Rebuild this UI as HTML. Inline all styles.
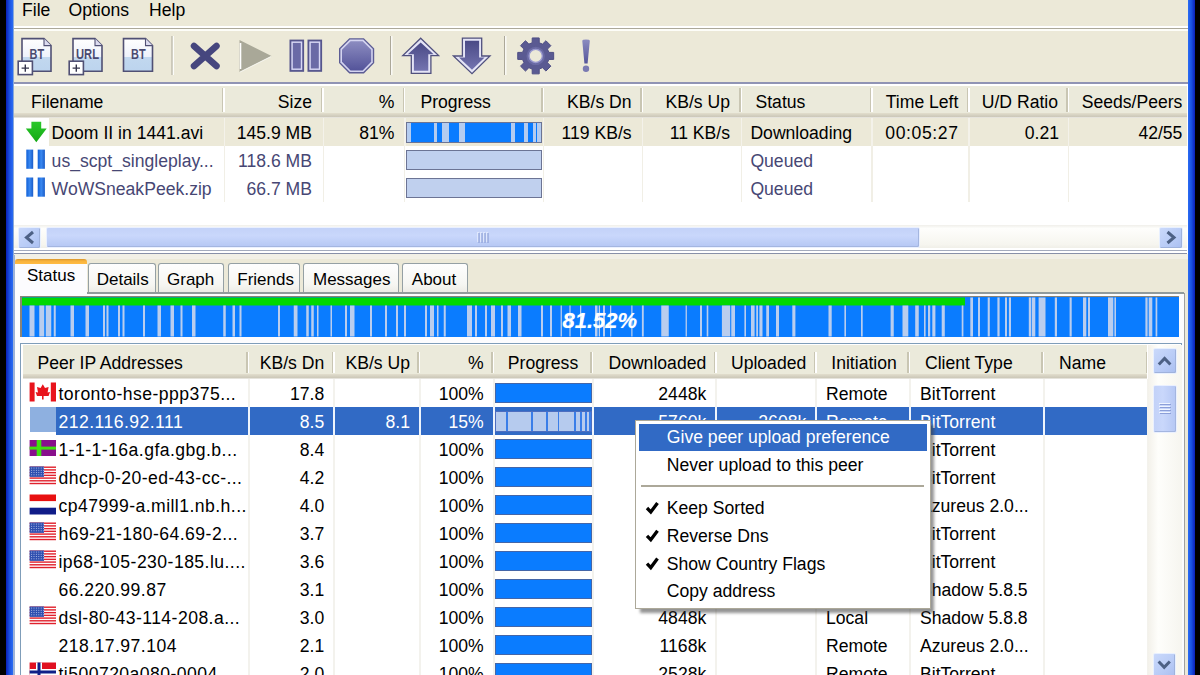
<!DOCTYPE html><html><head><meta charset="utf-8"><style>
html,body{margin:0;padding:0}
body{width:1200px;height:675px;overflow:hidden;position:relative;background:#ECE9D8;font-family:"Liberation Sans",sans-serif;font-size:18px}
.t{position:absolute;white-space:pre;line-height:20px}
.b{position:absolute}
svg{position:absolute;overflow:visible}
</style></head><body>
<div class="b" style="left:0px;top:0px;width:6px;height:675px;background:#000"></div>
<div class="b" style="left:6px;top:0px;width:7px;height:675px;background:linear-gradient(90deg,#0a20b8,#1a50e0 50%,#2a6cf4)"></div>
<div class="b" style="left:13px;top:0px;width:1px;height:675px;background:#8aa8d8"></div>
<div class="b" style="left:1188px;top:0px;width:7px;height:675px;background:linear-gradient(90deg,#2a6cf4,#1a50e0 50%,#0a20b8)"></div>
<div class="b" style="left:1195px;top:0px;width:5px;height:675px;background:#000"></div>
<div class="t" style="left:22px;top:0.18px;color:#000;font-size:17.6px;">File</div>
<div class="t" style="left:68.5px;top:0.18px;color:#000;font-size:17.6px;">Options</div>
<div class="t" style="left:149px;top:0.18px;color:#000;font-size:17.6px;">Help</div>
<div class="b" style="left:14px;top:26.4px;width:1174px;height:1.3px;background:#fff"></div>
<div class="b" style="left:14px;top:27.7px;width:1174px;height:1.6px;background:#aca899"></div>
<div class="b" style="left:14px;top:29.3px;width:1174px;height:1.9px;background:#fdfdf8"></div>
<svg style="left:0;top:0" width="1200" height="90" viewBox="0 0 1200 90"><defs><linearGradient id="docg" x1="0" y1="0" x2="0" y2="1"><stop offset="0" stop-color="#ffffff"/><stop offset="0.55" stop-color="#eef2fb"/><stop offset="0.56" stop-color="#c2d8ef"/><stop offset="1" stop-color="#bcd4ee"/></linearGradient><linearGradient id="purp" x1="0" y1="0" x2="0" y2="1"><stop offset="0" stop-color="#8c8cc0"/><stop offset="1" stop-color="#54549a"/></linearGradient><linearGradient id="purp2" x1="0" y1="0" x2="0" y2="1"><stop offset="0" stop-color="#5a5a98"/><stop offset="1" stop-color="#6c6cac"/></linearGradient></defs><g><path d="M22 38.6 H44 L51 45.6 V71.3 H22 Z" fill="url(#docg)" stroke="#505074" stroke-width="1.6"/><path d="M44 38.6 V45.6 H51" fill="#dcdcf0" stroke="#505074" stroke-width="1.1"/><text x="29.6" y="58.6" font-family="Liberation Sans" font-weight="bold" font-size="15.5" fill="#4a4a70" textLength="14.6" lengthAdjust="spacingAndGlyphs">BT</text><rect x="18.2" y="61.2" width="14.2" height="13.4" fill="#fff" stroke="#505074" stroke-width="1.6"/><path d="M21.599999999999998 68.10000000000001 H29.0 M25.299999999999997 64.4 V71.7" stroke="#34344c" stroke-width="1.4"/></g><g><path d="M73 38.6 H95 L102 45.6 V71.3 H73 Z" fill="url(#docg)" stroke="#505074" stroke-width="1.6"/><path d="M95 38.6 V45.6 H102" fill="#dcdcf0" stroke="#505074" stroke-width="1.1"/><text x="76" y="58.6" font-family="Liberation Sans" font-weight="bold" font-size="15.5" fill="#4a4a70" textLength="23" lengthAdjust="spacingAndGlyphs">URL</text><rect x="69.2" y="61.2" width="14.2" height="13.4" fill="#fff" stroke="#505074" stroke-width="1.6"/><path d="M72.60000000000001 68.10000000000001 H80.0 M76.3 64.4 V71.7" stroke="#34344c" stroke-width="1.4"/></g><g><path d="M123.5 38.6 H145.5 L152.5 45.6 V71.3 H123.5 Z" fill="url(#docg)" stroke="#505074" stroke-width="1.6"/><path d="M145.5 38.6 V45.6 H152.5" fill="#dcdcf0" stroke="#505074" stroke-width="1.1"/><text x="131.1" y="58.6" font-family="Liberation Sans" font-weight="bold" font-size="15.5" fill="#4a4a70" textLength="14.6" lengthAdjust="spacingAndGlyphs">BT</text></g><rect x="171.5" y="36" width="1.2" height="39" fill="#aca899"/><rect x="172.7" y="36" width="1.2" height="39" fill="#fff"/><rect x="390" y="36" width="1.2" height="39" fill="#aca899"/><rect x="391.2" y="36" width="1.2" height="39" fill="#fff"/><rect x="504" y="36" width="1.2" height="39" fill="#aca899"/><rect x="505.2" y="36" width="1.2" height="39" fill="#fff"/><path d="M194 46 L216.5 66 M216.5 46 L194 66" stroke="#46467e" stroke-width="6.5" stroke-linecap="round"/><path d="M239.5 40 L271.5 56 L239.5 72 Z" fill="#a9a898"/><path d="M240.5 43 V69" stroke="#fff" stroke-width="1.6"/><path d="M240 72 L271 56.5" stroke="#fff" stroke-width="1" opacity="0.7"/><rect x="290.3" y="40.4" width="13" height="30.6" fill="#6a6aa6" stroke="#56568c" stroke-width="1.6"/><rect x="292.1" y="42.2" width="9.4" height="27" fill="none" stroke="#d8d8f4" stroke-width="1.4"/><rect x="308.3" y="40.4" width="13" height="30.6" fill="#6a6aa6" stroke="#56568c" stroke-width="1.6"/><rect x="310.1" y="42.2" width="9.4" height="27" fill="none" stroke="#d8d8f4" stroke-width="1.4"/><polygon points="374.20,63.09 363.89,73.40 349.31,73.40 339.00,63.09 339.00,48.51 349.31,38.20 363.89,38.20 374.20,48.51" fill="#5c5c94"/><polygon points="372.80,62.51 363.31,72.00 349.89,72.00 340.40,62.51 340.40,49.09 349.89,39.60 363.31,39.60 372.80,49.09" fill="#d4d4f0"/><polygon points="371.20,61.85 362.65,70.40 350.55,70.40 342.00,61.85 342.00,49.75 350.55,41.20 362.65,41.20 371.20,49.75" fill="url(#purp)"/><linearGradient id="arw" x1="0" y1="0" x2="0" y2="1"><stop offset="0" stop-color="#4a4a86"/><stop offset="1" stop-color="#7474b0"/></linearGradient><path d="M420.7 38.2 L438.6 55.6 H430.9 V73.4 H411.3 V55.6 H402.8 Z" fill="#e4e4f6" stroke="#50507e" stroke-width="1.3" stroke-linejoin="miter"/><path d="M420.7 42.6 L433.6 54.2 H428.3 V70.8 H413.9 V54.2 H407.8 Z" fill="url(#arw)"/><path d="M462.4 38.2 H481.7 V56 H490 L472 73.6 L453.4 56 H462.4 Z" fill="#e4e4f6" stroke="#50507e" stroke-width="1.3"/><path d="M465 40.8 H479.1 V57.4 H484.6 L472 69.8 L459 57.4 H465 Z" fill="url(#arw)"/><polygon points="548.84,52.38 553.66,52.41 553.66,59.39 548.84,59.42 547.48,62.70 550.87,66.13 545.93,71.07 542.50,67.68 539.22,69.04 539.19,73.86 532.21,73.86 532.18,69.04 528.90,67.68 525.47,71.07 520.53,66.13 523.92,62.70 522.56,59.42 517.74,59.39 517.74,52.41 522.56,52.38 523.92,49.10 520.53,45.67 525.47,40.73 528.90,44.12 532.18,42.76 532.21,37.94 539.19,37.94 539.22,42.76 542.50,44.12 545.93,40.73 550.87,45.67 547.48,49.10" fill="#5a5a92" stroke="#4e4e84" stroke-width="1"/><circle cx="535.7" cy="55.9" r="9.2" fill="#6a6aa4"/><circle cx="535.7" cy="55.9" r="6.6" fill="#ece9d8" stroke="#9a9ad0" stroke-width="1.3"/><path d="M582.3 41 Q582.3 39.6 586 39.6 Q589.8 39.6 589.8 41 L587.6 63.5 H584.4 Z" fill="url(#purp)"/><circle cx="586" cy="68.8" r="3.2" fill="#7a7ab2"/></svg>
<div class="b" style="left:14px;top:81.9px;width:1174px;height:2.2px;background:#9094b4"></div>
<div class="b" style="left:14px;top:84px;width:1174px;height:2px;background:#fff"></div>
<div class="b" style="left:14px;top:86px;width:1174px;height:169px;background:#fff"></div>
<div class="b" style="left:14px;top:86px;width:1173px;height:32px;background:linear-gradient(#ebeadb 0,#ebeadb 27px,#e2decd 27px,#d6d2c2 29px,#cbc7b8 31px,#fff 32px)"></div>
<div class="b" style="left:221.8px;top:88px;width:1.6px;height:24px;background:#c9c6b3"></div>
<div class="b" style="left:223.4px;top:88px;width:1.4px;height:24px;background:#fff"></div>
<div class="b" style="left:320.8px;top:88px;width:1.6px;height:24px;background:#c9c6b3"></div>
<div class="b" style="left:322.40000000000003px;top:88px;width:1.4px;height:24px;background:#fff"></div>
<div class="b" style="left:402.5px;top:88px;width:1.6px;height:24px;background:#c9c6b3"></div>
<div class="b" style="left:404.1px;top:88px;width:1.4px;height:24px;background:#fff"></div>
<div class="b" style="left:541.3px;top:88px;width:1.6px;height:24px;background:#c9c6b3"></div>
<div class="b" style="left:542.9px;top:88px;width:1.4px;height:24px;background:#fff"></div>
<div class="b" style="left:640.3px;top:88px;width:1.6px;height:24px;background:#c9c6b3"></div>
<div class="b" style="left:641.9px;top:88px;width:1.4px;height:24px;background:#fff"></div>
<div class="b" style="left:739.3px;top:88px;width:1.6px;height:24px;background:#c9c6b3"></div>
<div class="b" style="left:740.9px;top:88px;width:1.4px;height:24px;background:#fff"></div>
<div class="b" style="left:869.8px;top:88px;width:1.6px;height:24px;background:#c9c6b3"></div>
<div class="b" style="left:871.4px;top:88px;width:1.4px;height:24px;background:#fff"></div>
<div class="b" style="left:966.8px;top:88px;width:1.6px;height:24px;background:#c9c6b3"></div>
<div class="b" style="left:968.4px;top:88px;width:1.4px;height:24px;background:#fff"></div>
<div class="b" style="left:1066.3px;top:88px;width:1.6px;height:24px;background:#c9c6b3"></div>
<div class="b" style="left:1067.8999999999999px;top:88px;width:1.4px;height:24px;background:#fff"></div>
<div class="t" style="left:31px;top:92.18px;color:#000;font-size:17.6px;">Filename</div>
<div class="t" style="right:888px;top:92.18px;color:#000;font-size:17.6px;text-align:right;">Size</div>
<div class="t" style="right:805.5px;top:92.18px;color:#000;font-size:17.6px;text-align:right;">%</div>
<div class="t" style="left:420.4px;top:92.18px;color:#000;font-size:17.6px;">Progress</div>
<div class="t" style="right:568.4px;top:92.18px;color:#000;font-size:17.6px;text-align:right;">KB/s Dn</div>
<div class="t" style="right:470px;top:92.18px;color:#000;font-size:17.6px;text-align:right;">KB/s Up</div>
<div class="t" style="left:755.5px;top:92.18px;color:#000;font-size:17.6px;">Status</div>
<div class="t" style="right:241.60000000000002px;top:92.18px;color:#000;font-size:17.6px;text-align:right;">Time Left</div>
<div class="t" style="right:142px;top:92.18px;color:#000;font-size:17.6px;text-align:right;">U/D Ratio</div>
<div class="t" style="right:17.59999999999991px;top:92.18px;color:#000;font-size:17.6px;text-align:right;">Seeds/Peers</div>
<div class="b" style="left:49px;top:118px;width:1138px;height:28px;background:#ece9d8"></div>
<div class="b" style="left:223.5px;top:118px;width:1.6px;height:28px;background:#f4f2ea"></div>
<div class="b" style="left:223.5px;top:146px;width:1.4px;height:56px;background:#f1efe6"></div>
<div class="b" style="left:322.5px;top:118px;width:1.6px;height:28px;background:#f4f2ea"></div>
<div class="b" style="left:322.5px;top:146px;width:1.4px;height:56px;background:#f1efe6"></div>
<div class="b" style="left:404px;top:118px;width:1.6px;height:28px;background:#f4f2ea"></div>
<div class="b" style="left:404px;top:146px;width:1.4px;height:56px;background:#f1efe6"></div>
<div class="b" style="left:542.8px;top:118px;width:1.6px;height:28px;background:#f4f2ea"></div>
<div class="b" style="left:542.8px;top:146px;width:1.4px;height:56px;background:#f1efe6"></div>
<div class="b" style="left:641.8px;top:118px;width:1.6px;height:28px;background:#f4f2ea"></div>
<div class="b" style="left:641.8px;top:146px;width:1.4px;height:56px;background:#f1efe6"></div>
<div class="b" style="left:740.8px;top:118px;width:1.6px;height:28px;background:#f4f2ea"></div>
<div class="b" style="left:740.8px;top:146px;width:1.4px;height:56px;background:#f1efe6"></div>
<div class="b" style="left:871.3px;top:118px;width:1.6px;height:28px;background:#f4f2ea"></div>
<div class="b" style="left:871.3px;top:146px;width:1.4px;height:56px;background:#f1efe6"></div>
<div class="b" style="left:968.3px;top:118px;width:1.6px;height:28px;background:#f4f2ea"></div>
<div class="b" style="left:968.3px;top:146px;width:1.4px;height:56px;background:#f1efe6"></div>
<div class="b" style="left:1067.8px;top:118px;width:1.6px;height:28px;background:#f4f2ea"></div>
<div class="b" style="left:1067.8px;top:146px;width:1.4px;height:56px;background:#f1efe6"></div>
<svg style="left:0;top:0" width="60" height="210" viewBox="0 0 60 210"><defs><linearGradient id="grn" x1="0" y1="0" x2="0" y2="1"><stop offset="0" stop-color="#2ac82a"/><stop offset="1" stop-color="#14a814"/></linearGradient><linearGradient id="pbar" x1="0" y1="0" x2="1" y2="0"><stop offset="0" stop-color="#1060d8"/><stop offset="0.5" stop-color="#3a88f0"/><stop offset="1" stop-color="#1a5cc8"/></linearGradient></defs><path d="M31.4 121.7 H41.2 V128.5 H46.7 L36.3 142.2 L25.8 128.5 H31.4 Z" fill="url(#grn)"/><rect x="26.3" y="149.6" width="6.9" height="19.2" fill="url(#pbar)"/><rect x="37.7" y="149.6" width="7.2" height="19.2" fill="url(#pbar)"/><rect x="26.3" y="177.5" width="6.9" height="19.2" fill="url(#pbar)"/><rect x="37.7" y="177.5" width="7.2" height="19.2" fill="url(#pbar)"/></svg>
<div class="t" style="left:51.6px;top:122.78px;color:#000;font-size:17.6px;">Doom II in 1441.avi</div>
<div class="t" style="right:888px;top:122.78px;color:#000;font-size:17.6px;text-align:right;">145.9 MB</div>
<div class="t" style="right:805.5px;top:122.78px;color:#000;font-size:17.6px;text-align:right;">81%</div>
<div class="t" style="right:568.4px;top:122.78px;color:#000;font-size:17.6px;text-align:right;">119 KB/s</div>
<div class="t" style="right:470px;top:122.78px;color:#000;font-size:17.6px;text-align:right;">11 KB/s</div>
<div class="t" style="left:750.4px;top:122.78px;color:#000;font-size:17.6px;">Downloading</div>
<div class="t" style="right:241.39999999999998px;top:122.78px;color:#000;font-size:17.6px;text-align:right;letter-spacing:0.6px">00:05:27</div>
<div class="t" style="right:141px;top:122.78px;color:#000;font-size:17.6px;text-align:right;">0.21</div>
<div class="t" style="right:17.59999999999991px;top:122.78px;color:#000;font-size:17.6px;text-align:right;">42/55</div>
<div class="t" style="left:51.6px;top:150.78px;color:#474774;font-size:17.6px;">us_scpt_singleplay...</div>
<div class="t" style="right:888px;top:150.78px;color:#474774;font-size:17.6px;text-align:right;">118.6 MB</div>
<div class="t" style="left:750.4px;top:150.78px;color:#474774;font-size:17.6px;">Queued</div>
<div class="t" style="left:51.6px;top:178.78px;color:#474774;font-size:17.6px;">WoWSneakPeek.zip</div>
<div class="t" style="right:888px;top:178.78px;color:#474774;font-size:17.6px;text-align:right;">66.7 MB</div>
<div class="t" style="left:750.4px;top:178.78px;color:#474774;font-size:17.6px;">Queued</div>
<div class="b" style="left:406.3px;top:121.7px;width:135.7px;height:21px;background:#0a7cff;border:1px solid #6c7494;box-sizing:border-box"></div>
<div class="b" style="left:407.3px;top:122.7px;width:4.0px;height:19px;background:#b4ccf0"></div>
<div class="b" style="left:434px;top:122.7px;width:3.3000000000000114px;height:19px;background:#b4ccf0"></div>
<div class="b" style="left:442px;top:122.7px;width:6.699999999999989px;height:19px;background:#b4ccf0"></div>
<div class="b" style="left:458.7px;top:122.7px;width:6.600000000000023px;height:19px;background:#b4ccf0"></div>
<div class="b" style="left:510.7px;top:122.7px;width:4.000000000000057px;height:19px;background:#b4ccf0"></div>
<div class="b" style="left:524px;top:122.7px;width:4px;height:19px;background:#b4ccf0"></div>
<div class="b" style="left:532.7px;top:122.7px;width:3.2999999999999545px;height:19px;background:#b4ccf0"></div>
<div class="b" style="left:537.3px;top:122.7px;width:3.7000000000000455px;height:19px;background:#b4ccf0"></div>
<div class="b" style="left:406.3px;top:150px;width:135.7px;height:20.3px;background:#c0d0ee;border:1.5px solid #6c7494;box-sizing:border-box"></div>
<div class="b" style="left:406.3px;top:178px;width:135.7px;height:20.3px;background:#c0d0ee;border:1.5px solid #6c7494;box-sizing:border-box"></div>
<div class="b" style="left:14px;top:224.5px;width:1173px;height:23.5px;background:linear-gradient(#f0efea,#fefefc 15%,#f6f5ef 85%,#f0efe8)"></div>
<div class="b" style="left:17.8px;top:226.5px;width:23.5px;height:22px;background:linear-gradient(135deg,#cad9fb,#b8cbf6 60%,#a9bef0);border:1px solid #e8f0ff;border-radius:2px;box-sizing:border-box;box-shadow:inset -1px -1px 0 #9fb2dc"></div>
<div class="b" style="left:1158.7px;top:226.5px;width:24px;height:22px;background:linear-gradient(135deg,#cad9fb,#b8cbf6 60%,#a9bef0);border:1px solid #e8f0ff;border-radius:2px;box-sizing:border-box;box-shadow:inset -1px -1px 0 #9fb2dc"></div>
<div class="b" style="left:46.4px;top:226.9px;width:474px;height:21.5px;"></div>
<div class="b" style="left:46.4px;top:226.9px;width:874.1px;height:21.3px;background:linear-gradient(#c3d2f8,#c9d7fb 40%,#b5c7f4);border:1px solid #eaf0ff;border-radius:2px;box-sizing:border-box;box-shadow:inset -1px -1px 0 #a4b6e0"></div>
<svg style="left:0;top:220" width="1200" height="34" viewBox="0 220 1200 34"><path d="M33 232 L26.5 237.5 L33 243" fill="none" stroke="#4d6185" stroke-width="3"/><path d="M1167.5 232 L1174 237.5 L1167.5 243" fill="none" stroke="#4d6185" stroke-width="3"/><path d="M478 232V242 M481 232V242 M484 232V242 M487 232V242" stroke="#eef4ff" stroke-width="1.2"/><path d="M479 233V243 M482 233V243 M485 233V243 M488 233V243" stroke="#8c9fd8" stroke-width="1.2"/></svg>
<div class="b" style="left:14px;top:248px;width:1173px;height:1.8px;background:#fff"></div>
<div class="b" style="left:14px;top:249.8px;width:1173px;height:1.2px;background:#a4abbd"></div>
<div class="b" style="left:14px;top:251px;width:1173px;height:1.7px;background:#fff"></div>
<div class="b" style="left:14px;top:252.7px;width:1173px;height:1.6px;background:#8890a8"></div>
<div class="b" style="left:14px;top:254.4px;width:1174px;height:5px;background:#f2f0e6"></div>
<div class="b" style="left:14.8px;top:293px;width:1169.5px;height:382px;background:#fcfcfe"></div>
<div class="b" style="left:1183.7px;top:293px;width:1.4px;height:382px;background:#a0a0a0"></div>
<div class="b" style="left:13.3px;top:255px;width:1.5px;height:420px;background:#9db2d8"></div>
<div class="b" style="left:87.5px;top:263.3px;width:68.0px;height:30px;background:linear-gradient(#fefefe,#f6f6f2 70%,#ecebe5);border:1.4px solid #95a0a4;border-bottom:none;border-radius:3px 3px 0 0;box-sizing:border-box"></div>
<div class="t" style="left:96.7px;top:269.78px;color:#000;font-size:17px;">Details</div>
<div class="b" style="left:158.3px;top:263.3px;width:66.19999999999999px;height:30px;background:linear-gradient(#fefefe,#f6f6f2 70%,#ecebe5);border:1.4px solid #95a0a4;border-bottom:none;border-radius:3px 3px 0 0;box-sizing:border-box"></div>
<div class="t" style="left:167px;top:269.78px;color:#000;font-size:17px;">Graph</div>
<div class="b" style="left:227.6px;top:263.3px;width:72.9px;height:30px;background:linear-gradient(#fefefe,#f6f6f2 70%,#ecebe5);border:1.4px solid #95a0a4;border-bottom:none;border-radius:3px 3px 0 0;box-sizing:border-box"></div>
<div class="t" style="left:237.3px;top:269.78px;color:#000;font-size:17px;">Friends</div>
<div class="b" style="left:303.4px;top:263.3px;width:95.60000000000002px;height:30px;background:linear-gradient(#fefefe,#f6f6f2 70%,#ecebe5);border:1.4px solid #95a0a4;border-bottom:none;border-radius:3px 3px 0 0;box-sizing:border-box"></div>
<div class="t" style="left:313px;top:269.78px;color:#000;font-size:17px;">Messages</div>
<div class="b" style="left:402px;top:263.3px;width:65.5px;height:30px;background:linear-gradient(#fefefe,#f6f6f2 70%,#ecebe5);border:1.4px solid #95a0a4;border-bottom:none;border-radius:3px 3px 0 0;box-sizing:border-box"></div>
<div class="t" style="left:411.8px;top:269.78px;color:#000;font-size:17px;">About</div>
<div class="b" style="left:87px;top:292.2px;width:1097px;height:1.4px;background:#919b9c"></div>
<div class="b" style="left:14.8px;top:259.5px;width:72.5px;height:35px;background:#fcfcfe;border-radius:4px 4px 0 0"></div>
<div class="b" style="left:14.8px;top:259.4px;width:72.5px;height:4.4px;background:linear-gradient(#d8962c,#f8b23c 40%,#ffbc44);border-radius:3px 3px 0 0"></div>
<div class="t" style="left:27px;top:266.38px;color:#000;font-size:17px;">Status</div>
<div class="b" style="left:20px;top:296px;width:1158.6px;height:40.5px;background:#0a7cff;border-top:1.5px solid #8a8478;border-left:2px solid #8a8478;box-sizing:border-box"></div>
<svg style="left:0;top:290" width="1200" height="50" viewBox="0 290 1200 50"><rect x="22" y="297.5" width="943" height="8" fill="#00d800"/><rect x="29.5" y="305.5" width="5.00" height="31.0" fill="#b9cdee"/><rect x="39.25" y="305.5" width="5.00" height="31.0" fill="#b9cdee"/><rect x="45.75" y="305.5" width="5.50" height="31.0" fill="#b9cdee"/><rect x="53.75" y="305.5" width="2.00" height="31.0" fill="#b9cdee"/><rect x="70.5" y="305.5" width="3.50" height="31.0" fill="#b9cdee"/><rect x="85.5" y="305.5" width="3.50" height="31.0" fill="#b9cdee"/><rect x="103" y="305.5" width="2.00" height="31.0" fill="#b9cdee"/><rect x="106.5" y="305.5" width="2.00" height="31.0" fill="#b9cdee"/><rect x="118" y="305.5" width="2.00" height="31.0" fill="#b9cdee"/><rect x="122.5" y="305.5" width="2.00" height="31.0" fill="#b9cdee"/><rect x="143" y="305.5" width="2.00" height="31.0" fill="#b9cdee"/><rect x="157.5" y="305.5" width="3.50" height="31.0" fill="#b9cdee"/><rect x="170.5" y="305.5" width="3.50" height="31.0" fill="#b9cdee"/><rect x="180.5" y="305.5" width="2.00" height="31.0" fill="#b9cdee"/><rect x="192" y="305.5" width="3.50" height="31.0" fill="#b9cdee"/><rect x="223.25" y="305.5" width="2.50" height="31.0" fill="#b9cdee"/><rect x="232.5" y="305.5" width="2.50" height="31.0" fill="#b9cdee"/><rect x="239.5" y="305.5" width="2.00" height="31.0" fill="#b9cdee"/><rect x="278" y="305.5" width="2.00" height="31.0" fill="#b9cdee"/><rect x="293.75" y="305.5" width="3.75" height="31.0" fill="#b9cdee"/><rect x="306.25" y="305.5" width="2.50" height="31.0" fill="#b9cdee"/><rect x="311.25" y="305.5" width="2.50" height="31.0" fill="#b9cdee"/><rect x="317" y="305.5" width="1.50" height="31.0" fill="#b9cdee"/><rect x="330.5" y="305.5" width="1.50" height="31.0" fill="#b9cdee"/><rect x="345" y="305.5" width="2.00" height="31.0" fill="#b9cdee"/><rect x="350" y="305.5" width="4.50" height="31.0" fill="#b9cdee"/><rect x="370" y="305.5" width="2.00" height="31.0" fill="#b9cdee"/><rect x="385" y="305.5" width="2.00" height="31.0" fill="#b9cdee"/><rect x="396" y="305.5" width="2.00" height="31.0" fill="#b9cdee"/><rect x="404" y="305.5" width="2.00" height="31.0" fill="#b9cdee"/><rect x="425" y="305.5" width="2.00" height="31.0" fill="#b9cdee"/><rect x="430" y="305.5" width="4.00" height="31.0" fill="#b9cdee"/><rect x="437" y="305.5" width="1.50" height="31.0" fill="#b9cdee"/><rect x="443.75" y="305.5" width="2.00" height="31.0" fill="#b9cdee"/><rect x="467" y="305.5" width="5.00" height="31.0" fill="#b9cdee"/><rect x="475" y="305.5" width="2.00" height="31.0" fill="#b9cdee"/><rect x="485" y="305.5" width="2.00" height="31.0" fill="#b9cdee"/><rect x="491" y="305.5" width="4.00" height="31.0" fill="#b9cdee"/><rect x="501" y="305.5" width="2.00" height="31.0" fill="#b9cdee"/><rect x="507.5" y="305.5" width="3.50" height="31.0" fill="#b9cdee"/><rect x="518" y="305.5" width="3.50" height="31.0" fill="#b9cdee"/><rect x="541" y="305.5" width="2.00" height="31.0" fill="#b9cdee"/><rect x="550" y="305.5" width="2.00" height="31.0" fill="#b9cdee"/><rect x="560.6" y="305.5" width="1.30" height="31.0" fill="#b9cdee"/><rect x="569.4" y="305.5" width="1.20" height="31.0" fill="#b9cdee"/><rect x="580" y="305.5" width="1.25" height="31.0" fill="#b9cdee"/><rect x="595" y="305.5" width="2.50" height="31.0" fill="#b9cdee"/><rect x="598.75" y="305.5" width="1.25" height="31.0" fill="#b9cdee"/><rect x="603" y="305.5" width="2.00" height="31.0" fill="#b9cdee"/><rect x="610" y="305.5" width="1.25" height="31.0" fill="#b9cdee"/><rect x="631.25" y="305.5" width="1.25" height="31.0" fill="#b9cdee"/><rect x="641.9" y="305.5" width="1.85" height="31.0" fill="#b9cdee"/><rect x="661.25" y="305.5" width="7.50" height="31.0" fill="#b9cdee"/><rect x="685.6" y="305.5" width="1.30" height="31.0" fill="#b9cdee"/><rect x="700" y="305.5" width="2.00" height="31.0" fill="#b9cdee"/><rect x="706.7" y="305.5" width="1.60" height="31.0" fill="#b9cdee"/><rect x="721.9" y="305.5" width="8.30" height="31.0" fill="#b9cdee"/><rect x="731.25" y="305.5" width="3.75" height="31.0" fill="#b9cdee"/><rect x="744.4" y="305.5" width="1.60" height="31.0" fill="#b9cdee"/><rect x="751" y="305.5" width="3.60" height="31.0" fill="#b9cdee"/><rect x="756.25" y="305.5" width="1.75" height="31.0" fill="#b9cdee"/><rect x="759.4" y="305.5" width="3.10" height="31.0" fill="#b9cdee"/><rect x="766.25" y="305.5" width="2.75" height="31.0" fill="#b9cdee"/><rect x="776" y="305.5" width="3.00" height="31.0" fill="#b9cdee"/><rect x="792.3" y="305.5" width="3.10" height="31.0" fill="#b9cdee"/><rect x="828.5" y="305.5" width="3.20" height="31.0" fill="#b9cdee"/><rect x="844.4" y="305.5" width="1.60" height="31.0" fill="#b9cdee"/><rect x="861" y="305.5" width="1.70" height="31.0" fill="#b9cdee"/><rect x="890.6" y="305.5" width="3.15" height="31.0" fill="#b9cdee"/><rect x="902.5" y="305.5" width="5.80" height="31.0" fill="#b9cdee"/><rect x="915.2" y="305.5" width="3.55" height="31.0" fill="#b9cdee"/><rect x="924" y="305.5" width="1.60" height="31.0" fill="#b9cdee"/><rect x="928" y="305.5" width="2.20" height="31.0" fill="#b9cdee"/><rect x="932.3" y="305.5" width="3.10" height="31.0" fill="#b9cdee"/><rect x="941.7" y="305.5" width="3.10" height="31.0" fill="#b9cdee"/><rect x="961.7" y="305.5" width="1.70" height="31.0" fill="#b9cdee"/><rect x="970.3" y="297.5" width="2.70" height="39.0" fill="#b9cdee"/><rect x="978" y="297.5" width="2.00" height="39.0" fill="#b9cdee"/><rect x="987.7" y="297.5" width="2.10" height="39.0" fill="#b9cdee"/><rect x="997.4" y="297.5" width="2.20" height="39.0" fill="#b9cdee"/><rect x="1005" y="297.5" width="2.00" height="39.0" fill="#b9cdee"/><rect x="1008.9" y="297.5" width="2.10" height="39.0" fill="#b9cdee"/><rect x="1028.8" y="297.5" width="2.20" height="39.0" fill="#b9cdee"/><rect x="1031.7" y="297.5" width="3.60" height="39.0" fill="#b9cdee"/><rect x="1038.6" y="297.5" width="6.90" height="39.0" fill="#b9cdee"/><rect x="1054.8" y="297.5" width="2.20" height="39.0" fill="#b9cdee"/><rect x="1069.6" y="297.5" width="2.10" height="39.0" fill="#b9cdee"/><rect x="1083" y="297.5" width="3.30" height="39.0" fill="#b9cdee"/><rect x="1088" y="297.5" width="2.00" height="39.0" fill="#b9cdee"/><rect x="1108" y="297.5" width="5.30" height="39.0" fill="#b9cdee"/><rect x="1114.4" y="297.5" width="1.60" height="39.0" fill="#b9cdee"/><rect x="1145.4" y="297.5" width="2.20" height="39.0" fill="#b9cdee"/><rect x="1148.7" y="297.5" width="3.60" height="39.0" fill="#b9cdee"/><rect x="1155.6" y="297.5" width="1.70" height="39.0" fill="#b9cdee"/></svg>
<div class="t" style="left:562.5px;top:310.73px;color:#fff;font-size:22px;font-weight:bold;font-style:italic;text-shadow:0 0 1px rgba(255,255,255,.5)">81.52%</div>
<div class="b" style="left:20px;top:343.4px;width:1161.6px;height:340px;background:#fff;border:1.2px solid #7f9db9;box-sizing:border-box"></div>
<div class="b" style="left:22.5px;top:345px;width:1124.5px;height:34px;background:linear-gradient(#ebeadb 0,#ebeadb 29px,#e2decd 29px,#d6d2c2 31px,#cbc7b8 33px,#fff 34px)"></div>
<div class="b" style="left:246.2px;top:351.5px;width:1.6px;height:21px;background:#c9c6b3"></div>
<div class="b" style="left:247.8px;top:351.5px;width:1.4px;height:21px;background:#fff"></div>
<div class="b" style="left:331.7px;top:351.5px;width:1.6px;height:21px;background:#c9c6b3"></div>
<div class="b" style="left:333.3px;top:351.5px;width:1.4px;height:21px;background:#fff"></div>
<div class="b" style="left:417.45px;top:351.5px;width:1.6px;height:21px;background:#c9c6b3"></div>
<div class="b" style="left:419.05px;top:351.5px;width:1.4px;height:21px;background:#fff"></div>
<div class="b" style="left:491.2px;top:351.5px;width:1.6px;height:21px;background:#c9c6b3"></div>
<div class="b" style="left:492.8px;top:351.5px;width:1.4px;height:21px;background:#fff"></div>
<div class="b" style="left:589.95px;top:351.5px;width:1.6px;height:21px;background:#c9c6b3"></div>
<div class="b" style="left:591.55px;top:351.5px;width:1.4px;height:21px;background:#fff"></div>
<div class="b" style="left:713.7px;top:351.5px;width:1.6px;height:21px;background:#c9c6b3"></div>
<div class="b" style="left:715.3px;top:351.5px;width:1.4px;height:21px;background:#fff"></div>
<div class="b" style="left:813.7px;top:351.5px;width:1.6px;height:21px;background:#c9c6b3"></div>
<div class="b" style="left:815.3px;top:351.5px;width:1.4px;height:21px;background:#fff"></div>
<div class="b" style="left:907.45px;top:351.5px;width:1.6px;height:21px;background:#c9c6b3"></div>
<div class="b" style="left:909.05px;top:351.5px;width:1.4px;height:21px;background:#fff"></div>
<div class="b" style="left:1041.4px;top:351.5px;width:1.6px;height:21px;background:#c9c6b3"></div>
<div class="b" style="left:1043.0px;top:351.5px;width:1.4px;height:21px;background:#fff"></div>
<div class="b" style="left:1145.5px;top:351.5px;width:1.4px;height:21px;background:#c9c6b3"></div>
<div class="t" style="left:37.5px;top:353.18px;color:#000;font-size:17.6px;">Peer IP Addresses</div>
<div class="t" style="right:875.75px;top:353.18px;color:#000;font-size:17.6px;text-align:right;">KB/s Dn</div>
<div class="t" style="right:790px;top:353.18px;color:#000;font-size:17.6px;text-align:right;">KB/s Up</div>
<div class="t" style="right:716.25px;top:353.18px;color:#000;font-size:17.6px;text-align:right;">%</div>
<div class="t" style="left:393px;width:300px;top:353.18px;color:#000;font-size:17.6px;text-align:center;">Progress</div>
<div class="t" style="right:493.75px;top:353.18px;color:#000;font-size:17.6px;text-align:right;">Downloaded</div>
<div class="t" style="right:393.75px;top:353.18px;color:#000;font-size:17.6px;text-align:right;">Uploaded</div>
<div class="t" style="left:831.25px;top:353.18px;color:#000;font-size:17.6px;">Initiation</div>
<div class="t" style="left:925px;top:353.18px;color:#000;font-size:17.6px;">Client Type</div>
<div class="t" style="left:1059px;top:353.18px;color:#000;font-size:17.6px;">Name</div>
<div class="b" style="left:247.8px;top:379px;width:2.2px;height:300px;background:#f3f2ed"></div>
<div class="b" style="left:333.3px;top:379px;width:2.2px;height:300px;background:#f3f2ed"></div>
<div class="b" style="left:419.05px;top:379px;width:2.2px;height:300px;background:#f3f2ed"></div>
<div class="b" style="left:492.8px;top:379px;width:2.2px;height:300px;background:#f3f2ed"></div>
<div class="b" style="left:591.55px;top:379px;width:2.2px;height:300px;background:#f3f2ed"></div>
<div class="b" style="left:715.3px;top:379px;width:2.2px;height:300px;background:#f3f2ed"></div>
<div class="b" style="left:815.3px;top:379px;width:2.2px;height:300px;background:#f3f2ed"></div>
<div class="b" style="left:909.05px;top:379px;width:2.2px;height:300px;background:#f3f2ed"></div>
<div class="b" style="left:1043.0px;top:379px;width:2.2px;height:300px;background:#f3f2ed"></div>
<div class="b" style="left:1146.5px;top:379px;width:1.6px;height:300px;background:#f3f2ed"></div>
<div class="b" style="left:56px;top:407px;width:1090.7px;height:28px;background:#316ac5"></div>
<div class="b" style="left:29.6px;top:407.4px;width:26.4px;height:25px;background:#8eb0e0"></div>
<div class="b" style="left:247.8px;top:407px;width:2.2px;height:28px;background:#eef4fc"></div>
<div class="b" style="left:333.3px;top:407px;width:2.2px;height:28px;background:#eef4fc"></div>
<div class="b" style="left:419.05px;top:407px;width:2.2px;height:28px;background:#eef4fc"></div>
<div class="b" style="left:492.8px;top:407px;width:2.2px;height:28px;background:#eef4fc"></div>
<div class="b" style="left:591.55px;top:407px;width:2.2px;height:28px;background:#eef4fc"></div>
<div class="b" style="left:715.3px;top:407px;width:2.2px;height:28px;background:#eef4fc"></div>
<div class="b" style="left:815.3px;top:407px;width:2.2px;height:28px;background:#eef4fc"></div>
<div class="b" style="left:909.05px;top:407px;width:2.2px;height:28px;background:#eef4fc"></div>
<div class="b" style="left:1043.0px;top:407px;width:2.2px;height:28px;background:#eef4fc"></div>
<div class="t" style="left:58.5px;top:383.78px;color:#000;font-size:17.6px;letter-spacing:0.45px">toronto-hse-ppp375...</div>
<div class="t" style="right:875.75px;top:383.78px;color:#000;font-size:17.6px;text-align:right;">17.8</div>
<div class="t" style="right:716.25px;top:383.78px;color:#000;font-size:17.6px;text-align:right;">100%</div>
<div class="b" style="left:495px;top:382.8px;width:96.8px;height:20.6px;background:#0a7cff;border:1.2px solid #4466a8;box-sizing:border-box"></div>
<div class="t" style="right:493.75px;top:383.78px;color:#000;font-size:17.6px;text-align:right;">2448k</div>
<div class="t" style="left:826px;top:383.78px;color:#000;font-size:17.6px;">Remote</div>
<div class="t" style="left:920px;top:383.78px;color:#000;font-size:17.6px;">BitTorrent</div>
<div class="t" style="left:58.5px;top:411.78px;color:#fff;font-size:17.6px;letter-spacing:0.45px">212.116.92.111</div>
<div class="t" style="right:875.75px;top:411.78px;color:#fff;font-size:17.6px;text-align:right;">8.5</div>
<div class="t" style="right:790px;top:411.78px;color:#fff;font-size:17.6px;text-align:right;">8.1</div>
<div class="t" style="right:716.25px;top:411.78px;color:#fff;font-size:17.6px;text-align:right;">15%</div>
<div class="b" style="left:495px;top:410.5px;width:96.75px;height:21.2px;background:#b6cbee;border:1px solid #4d6ec0;box-sizing:border-box"></div>
<div class="b" style="left:506px;top:411.5px;width:1.6px;height:19.2px;background:#3a7ee8"></div>
<div class="b" style="left:531px;top:411.5px;width:1.6px;height:19.2px;background:#3a7ee8"></div>
<div class="b" style="left:546px;top:411.5px;width:1.6px;height:19.2px;background:#3a7ee8"></div>
<div class="b" style="left:557.5px;top:411.5px;width:1.6px;height:19.2px;background:#3a7ee8"></div>
<div class="b" style="left:574px;top:411.5px;width:1.6px;height:19.2px;background:#3a7ee8"></div>
<div class="b" style="left:580px;top:411.5px;width:1.6px;height:19.2px;background:#3a7ee8"></div>
<div class="b" style="left:585px;top:411.5px;width:1.6px;height:19.2px;background:#3a7ee8"></div>
<div class="b" style="left:589px;top:411.5px;width:1.6px;height:19.2px;background:#3a7ee8"></div>
<div class="t" style="right:493.75px;top:411.78px;color:#fff;font-size:17.6px;text-align:right;">5760k</div>
<div class="t" style="right:393.75px;top:411.78px;color:#fff;font-size:17.6px;text-align:right;">2608k</div>
<div class="t" style="left:826px;top:411.78px;color:#fff;font-size:17.6px;">Remote</div>
<div class="t" style="left:920px;top:411.78px;color:#fff;font-size:17.6px;">BitTorrent</div>
<div class="t" style="left:58.5px;top:439.78px;color:#000;font-size:17.6px;letter-spacing:0.45px">1-1-1-16a.gfa.gbg.b...</div>
<div class="t" style="right:875.75px;top:439.78px;color:#000;font-size:17.6px;text-align:right;">8.4</div>
<div class="t" style="right:716.25px;top:439.78px;color:#000;font-size:17.6px;text-align:right;">100%</div>
<div class="b" style="left:495px;top:438.8px;width:96.8px;height:20.6px;background:#0a7cff;border:1.2px solid #4466a8;box-sizing:border-box"></div>
<div class="t" style="left:920px;top:439.78px;color:#000;font-size:17.6px;">BitTorrent</div>
<div class="t" style="left:58.5px;top:467.78px;color:#000;font-size:17.6px;letter-spacing:0.45px">dhcp-0-20-ed-43-cc-...</div>
<div class="t" style="right:875.75px;top:467.78px;color:#000;font-size:17.6px;text-align:right;">4.2</div>
<div class="t" style="right:716.25px;top:467.78px;color:#000;font-size:17.6px;text-align:right;">100%</div>
<div class="b" style="left:495px;top:466.8px;width:96.8px;height:20.6px;background:#0a7cff;border:1.2px solid #4466a8;box-sizing:border-box"></div>
<div class="t" style="left:920px;top:467.78px;color:#000;font-size:17.6px;">BitTorrent</div>
<div class="t" style="left:58.5px;top:495.78px;color:#000;font-size:17.6px;letter-spacing:0.45px">cp47999-a.mill1.nb.h...</div>
<div class="t" style="right:875.75px;top:495.78px;color:#000;font-size:17.6px;text-align:right;">4.0</div>
<div class="t" style="right:716.25px;top:495.78px;color:#000;font-size:17.6px;text-align:right;">100%</div>
<div class="b" style="left:495px;top:494.8px;width:96.8px;height:20.6px;background:#0a7cff;border:1.2px solid #4466a8;box-sizing:border-box"></div>
<div class="t" style="left:920px;top:495.78px;color:#000;font-size:17.6px;">Azureus 2.0...</div>
<div class="t" style="left:58.5px;top:523.78px;color:#000;font-size:17.6px;letter-spacing:0.45px">h69-21-180-64.69-2...</div>
<div class="t" style="right:875.75px;top:523.78px;color:#000;font-size:17.6px;text-align:right;">3.7</div>
<div class="t" style="right:716.25px;top:523.78px;color:#000;font-size:17.6px;text-align:right;">100%</div>
<div class="b" style="left:495px;top:522.8px;width:96.8px;height:20.6px;background:#0a7cff;border:1.2px solid #4466a8;box-sizing:border-box"></div>
<div class="t" style="left:920px;top:523.78px;color:#000;font-size:17.6px;">BitTorrent</div>
<div class="t" style="left:58.5px;top:551.78px;color:#000;font-size:17.6px;letter-spacing:0.45px">ip68-105-230-185.lu....</div>
<div class="t" style="right:875.75px;top:551.78px;color:#000;font-size:17.6px;text-align:right;">3.6</div>
<div class="t" style="right:716.25px;top:551.78px;color:#000;font-size:17.6px;text-align:right;">100%</div>
<div class="b" style="left:495px;top:550.8px;width:96.8px;height:20.6px;background:#0a7cff;border:1.2px solid #4466a8;box-sizing:border-box"></div>
<div class="t" style="left:920px;top:551.78px;color:#000;font-size:17.6px;">BitTorrent</div>
<div class="t" style="left:58.5px;top:579.78px;color:#000;font-size:17.6px;letter-spacing:0.45px">66.220.99.87</div>
<div class="t" style="right:875.75px;top:579.78px;color:#000;font-size:17.6px;text-align:right;">3.1</div>
<div class="t" style="right:716.25px;top:579.78px;color:#000;font-size:17.6px;text-align:right;">100%</div>
<div class="b" style="left:495px;top:578.8px;width:96.8px;height:20.6px;background:#0a7cff;border:1.2px solid #4466a8;box-sizing:border-box"></div>
<div class="t" style="left:920px;top:579.78px;color:#000;font-size:17.6px;">Shadow 5.8.5</div>
<div class="t" style="left:58.5px;top:607.78px;color:#000;font-size:17.6px;letter-spacing:0.45px">dsl-80-43-114-208.a...</div>
<div class="t" style="right:875.75px;top:607.78px;color:#000;font-size:17.6px;text-align:right;">3.0</div>
<div class="t" style="right:716.25px;top:607.78px;color:#000;font-size:17.6px;text-align:right;">100%</div>
<div class="b" style="left:495px;top:606.8px;width:96.8px;height:20.6px;background:#0a7cff;border:1.2px solid #4466a8;box-sizing:border-box"></div>
<div class="t" style="right:493.75px;top:607.78px;color:#000;font-size:17.6px;text-align:right;">4848k</div>
<div class="t" style="left:826px;top:607.78px;color:#000;font-size:17.6px;">Local</div>
<div class="t" style="left:920px;top:607.78px;color:#000;font-size:17.6px;">Shadow 5.8.8</div>
<div class="t" style="left:58.5px;top:635.78px;color:#000;font-size:17.6px;letter-spacing:0.45px">218.17.97.104</div>
<div class="t" style="right:875.75px;top:635.78px;color:#000;font-size:17.6px;text-align:right;">2.1</div>
<div class="t" style="right:716.25px;top:635.78px;color:#000;font-size:17.6px;text-align:right;">100%</div>
<div class="b" style="left:495px;top:634.8px;width:96.8px;height:20.6px;background:#0a7cff;border:1.2px solid #4466a8;box-sizing:border-box"></div>
<div class="t" style="right:493.75px;top:635.78px;color:#000;font-size:17.6px;text-align:right;">1168k</div>
<div class="t" style="left:826px;top:635.78px;color:#000;font-size:17.6px;">Remote</div>
<div class="t" style="left:920px;top:635.78px;color:#000;font-size:17.6px;">Azureus 2.0...</div>
<div class="t" style="left:58.5px;top:663.78px;color:#000;font-size:17.6px;letter-spacing:0.45px">ti500720a080-0004...</div>
<div class="t" style="right:875.75px;top:663.78px;color:#000;font-size:17.6px;text-align:right;">2.0</div>
<div class="t" style="right:716.25px;top:663.78px;color:#000;font-size:17.6px;text-align:right;">100%</div>
<div class="b" style="left:495px;top:662.8px;width:96.8px;height:20.6px;background:#0a7cff;border:1.2px solid #4466a8;box-sizing:border-box"></div>
<div class="t" style="right:493.75px;top:663.78px;color:#000;font-size:17.6px;text-align:right;">2528k</div>
<div class="t" style="left:826px;top:663.78px;color:#000;font-size:17.6px;">Remote</div>
<div class="t" style="left:920px;top:663.78px;color:#000;font-size:17.6px;">BitTorrent</div>
<svg style="left:0;top:0" width="60" height="675" viewBox="0 0 60 675"><rect x="29.6" y="382.5" width="26.4" height="19" fill="#fff"/><rect x="29.6" y="382.5" width="5" height="19" fill="#e8141c"/><rect x="50.8" y="382.5" width="5.2" height="19" fill="#e8141c"/><path d="M42.8 384.3 L45 388.0 L48.6 387.0 L47.6 392.5 L50 392.1 L48.6 396.1 H43.6 V399.5 H42 V396.1 H37 L35.6 392.1 L38 392.5 L37 387.0 L40.6 388.0 Z" fill="#e8141c"/><rect x="29.6" y="440" width="26.4" height="16" fill="#88108c"/><rect x="36.7" y="440" width="4.6" height="16" fill="#40e010"/><rect x="29.6" y="446.6" width="26.4" height="3" fill="#40e010"/><rect x="29.6" y="466.5" width="26.4" height="19" fill="#fff"/><rect x="29.6" y="466.50" width="26.4" height="1.4" fill="#e0202c"/><rect x="29.6" y="469.22" width="26.4" height="1.4" fill="#e0202c"/><rect x="29.6" y="471.94" width="26.4" height="1.4" fill="#e0202c"/><rect x="29.6" y="474.66" width="26.4" height="1.4" fill="#e0202c"/><rect x="29.6" y="477.38" width="26.4" height="1.4" fill="#e0202c"/><rect x="29.6" y="480.10" width="26.4" height="1.4" fill="#e0202c"/><rect x="29.6" y="482.82" width="26.4" height="1.4" fill="#e0202c"/><rect x="29.6" y="466.5" width="14.4" height="10.4" fill="#3050b0"/><circle cx="31.6" cy="468.1" r="0.5" fill="#c8d0f0"/><circle cx="31.6" cy="470.3" r="0.5" fill="#c8d0f0"/><circle cx="31.6" cy="472.5" r="0.5" fill="#c8d0f0"/><circle cx="31.6" cy="474.7" r="0.5" fill="#c8d0f0"/><circle cx="34.0" cy="468.1" r="0.5" fill="#c8d0f0"/><circle cx="34.0" cy="470.3" r="0.5" fill="#c8d0f0"/><circle cx="34.0" cy="472.5" r="0.5" fill="#c8d0f0"/><circle cx="34.0" cy="474.7" r="0.5" fill="#c8d0f0"/><circle cx="36.4" cy="468.1" r="0.5" fill="#c8d0f0"/><circle cx="36.4" cy="470.3" r="0.5" fill="#c8d0f0"/><circle cx="36.4" cy="472.5" r="0.5" fill="#c8d0f0"/><circle cx="36.4" cy="474.7" r="0.5" fill="#c8d0f0"/><circle cx="38.8" cy="468.1" r="0.5" fill="#c8d0f0"/><circle cx="38.8" cy="470.3" r="0.5" fill="#c8d0f0"/><circle cx="38.8" cy="472.5" r="0.5" fill="#c8d0f0"/><circle cx="38.8" cy="474.7" r="0.5" fill="#c8d0f0"/><circle cx="41.2" cy="468.1" r="0.5" fill="#c8d0f0"/><circle cx="41.2" cy="470.3" r="0.5" fill="#c8d0f0"/><circle cx="41.2" cy="472.5" r="0.5" fill="#c8d0f0"/><circle cx="41.2" cy="474.7" r="0.5" fill="#c8d0f0"/><circle cx="43.6" cy="468.1" r="0.5" fill="#c8d0f0"/><circle cx="43.6" cy="470.3" r="0.5" fill="#c8d0f0"/><circle cx="43.6" cy="472.5" r="0.5" fill="#c8d0f0"/><circle cx="43.6" cy="474.7" r="0.5" fill="#c8d0f0"/><rect x="29.6" y="494.5" width="26.4" height="20" fill="#fff"/><rect x="29.6" y="494.5" width="26.4" height="6.6" fill="#e81010"/><rect x="29.6" y="507.7" width="26.4" height="6.8" fill="#101c88"/><rect x="29.6" y="522.5" width="26.4" height="19" fill="#fff"/><rect x="29.6" y="522.50" width="26.4" height="1.4" fill="#e0202c"/><rect x="29.6" y="525.22" width="26.4" height="1.4" fill="#e0202c"/><rect x="29.6" y="527.94" width="26.4" height="1.4" fill="#e0202c"/><rect x="29.6" y="530.66" width="26.4" height="1.4" fill="#e0202c"/><rect x="29.6" y="533.38" width="26.4" height="1.4" fill="#e0202c"/><rect x="29.6" y="536.10" width="26.4" height="1.4" fill="#e0202c"/><rect x="29.6" y="538.82" width="26.4" height="1.4" fill="#e0202c"/><rect x="29.6" y="522.5" width="14.4" height="10.4" fill="#3050b0"/><circle cx="31.6" cy="524.1" r="0.5" fill="#c8d0f0"/><circle cx="31.6" cy="526.3" r="0.5" fill="#c8d0f0"/><circle cx="31.6" cy="528.5" r="0.5" fill="#c8d0f0"/><circle cx="31.6" cy="530.7" r="0.5" fill="#c8d0f0"/><circle cx="34.0" cy="524.1" r="0.5" fill="#c8d0f0"/><circle cx="34.0" cy="526.3" r="0.5" fill="#c8d0f0"/><circle cx="34.0" cy="528.5" r="0.5" fill="#c8d0f0"/><circle cx="34.0" cy="530.7" r="0.5" fill="#c8d0f0"/><circle cx="36.4" cy="524.1" r="0.5" fill="#c8d0f0"/><circle cx="36.4" cy="526.3" r="0.5" fill="#c8d0f0"/><circle cx="36.4" cy="528.5" r="0.5" fill="#c8d0f0"/><circle cx="36.4" cy="530.7" r="0.5" fill="#c8d0f0"/><circle cx="38.8" cy="524.1" r="0.5" fill="#c8d0f0"/><circle cx="38.8" cy="526.3" r="0.5" fill="#c8d0f0"/><circle cx="38.8" cy="528.5" r="0.5" fill="#c8d0f0"/><circle cx="38.8" cy="530.7" r="0.5" fill="#c8d0f0"/><circle cx="41.2" cy="524.1" r="0.5" fill="#c8d0f0"/><circle cx="41.2" cy="526.3" r="0.5" fill="#c8d0f0"/><circle cx="41.2" cy="528.5" r="0.5" fill="#c8d0f0"/><circle cx="41.2" cy="530.7" r="0.5" fill="#c8d0f0"/><circle cx="43.6" cy="524.1" r="0.5" fill="#c8d0f0"/><circle cx="43.6" cy="526.3" r="0.5" fill="#c8d0f0"/><circle cx="43.6" cy="528.5" r="0.5" fill="#c8d0f0"/><circle cx="43.6" cy="530.7" r="0.5" fill="#c8d0f0"/><rect x="29.6" y="550.5" width="26.4" height="19" fill="#fff"/><rect x="29.6" y="550.50" width="26.4" height="1.4" fill="#e0202c"/><rect x="29.6" y="553.22" width="26.4" height="1.4" fill="#e0202c"/><rect x="29.6" y="555.94" width="26.4" height="1.4" fill="#e0202c"/><rect x="29.6" y="558.66" width="26.4" height="1.4" fill="#e0202c"/><rect x="29.6" y="561.38" width="26.4" height="1.4" fill="#e0202c"/><rect x="29.6" y="564.10" width="26.4" height="1.4" fill="#e0202c"/><rect x="29.6" y="566.82" width="26.4" height="1.4" fill="#e0202c"/><rect x="29.6" y="550.5" width="14.4" height="10.4" fill="#3050b0"/><circle cx="31.6" cy="552.1" r="0.5" fill="#c8d0f0"/><circle cx="31.6" cy="554.3" r="0.5" fill="#c8d0f0"/><circle cx="31.6" cy="556.5" r="0.5" fill="#c8d0f0"/><circle cx="31.6" cy="558.7" r="0.5" fill="#c8d0f0"/><circle cx="34.0" cy="552.1" r="0.5" fill="#c8d0f0"/><circle cx="34.0" cy="554.3" r="0.5" fill="#c8d0f0"/><circle cx="34.0" cy="556.5" r="0.5" fill="#c8d0f0"/><circle cx="34.0" cy="558.7" r="0.5" fill="#c8d0f0"/><circle cx="36.4" cy="552.1" r="0.5" fill="#c8d0f0"/><circle cx="36.4" cy="554.3" r="0.5" fill="#c8d0f0"/><circle cx="36.4" cy="556.5" r="0.5" fill="#c8d0f0"/><circle cx="36.4" cy="558.7" r="0.5" fill="#c8d0f0"/><circle cx="38.8" cy="552.1" r="0.5" fill="#c8d0f0"/><circle cx="38.8" cy="554.3" r="0.5" fill="#c8d0f0"/><circle cx="38.8" cy="556.5" r="0.5" fill="#c8d0f0"/><circle cx="38.8" cy="558.7" r="0.5" fill="#c8d0f0"/><circle cx="41.2" cy="552.1" r="0.5" fill="#c8d0f0"/><circle cx="41.2" cy="554.3" r="0.5" fill="#c8d0f0"/><circle cx="41.2" cy="556.5" r="0.5" fill="#c8d0f0"/><circle cx="41.2" cy="558.7" r="0.5" fill="#c8d0f0"/><circle cx="43.6" cy="552.1" r="0.5" fill="#c8d0f0"/><circle cx="43.6" cy="554.3" r="0.5" fill="#c8d0f0"/><circle cx="43.6" cy="556.5" r="0.5" fill="#c8d0f0"/><circle cx="43.6" cy="558.7" r="0.5" fill="#c8d0f0"/><rect x="29.6" y="606.5" width="26.4" height="19" fill="#fff"/><rect x="29.6" y="606.50" width="26.4" height="1.4" fill="#e0202c"/><rect x="29.6" y="609.22" width="26.4" height="1.4" fill="#e0202c"/><rect x="29.6" y="611.94" width="26.4" height="1.4" fill="#e0202c"/><rect x="29.6" y="614.66" width="26.4" height="1.4" fill="#e0202c"/><rect x="29.6" y="617.38" width="26.4" height="1.4" fill="#e0202c"/><rect x="29.6" y="620.10" width="26.4" height="1.4" fill="#e0202c"/><rect x="29.6" y="622.82" width="26.4" height="1.4" fill="#e0202c"/><rect x="29.6" y="606.5" width="14.4" height="10.4" fill="#3050b0"/><circle cx="31.6" cy="608.1" r="0.5" fill="#c8d0f0"/><circle cx="31.6" cy="610.3" r="0.5" fill="#c8d0f0"/><circle cx="31.6" cy="612.5" r="0.5" fill="#c8d0f0"/><circle cx="31.6" cy="614.7" r="0.5" fill="#c8d0f0"/><circle cx="34.0" cy="608.1" r="0.5" fill="#c8d0f0"/><circle cx="34.0" cy="610.3" r="0.5" fill="#c8d0f0"/><circle cx="34.0" cy="612.5" r="0.5" fill="#c8d0f0"/><circle cx="34.0" cy="614.7" r="0.5" fill="#c8d0f0"/><circle cx="36.4" cy="608.1" r="0.5" fill="#c8d0f0"/><circle cx="36.4" cy="610.3" r="0.5" fill="#c8d0f0"/><circle cx="36.4" cy="612.5" r="0.5" fill="#c8d0f0"/><circle cx="36.4" cy="614.7" r="0.5" fill="#c8d0f0"/><circle cx="38.8" cy="608.1" r="0.5" fill="#c8d0f0"/><circle cx="38.8" cy="610.3" r="0.5" fill="#c8d0f0"/><circle cx="38.8" cy="612.5" r="0.5" fill="#c8d0f0"/><circle cx="38.8" cy="614.7" r="0.5" fill="#c8d0f0"/><circle cx="41.2" cy="608.1" r="0.5" fill="#c8d0f0"/><circle cx="41.2" cy="610.3" r="0.5" fill="#c8d0f0"/><circle cx="41.2" cy="612.5" r="0.5" fill="#c8d0f0"/><circle cx="41.2" cy="614.7" r="0.5" fill="#c8d0f0"/><circle cx="43.6" cy="608.1" r="0.5" fill="#c8d0f0"/><circle cx="43.6" cy="610.3" r="0.5" fill="#c8d0f0"/><circle cx="43.6" cy="612.5" r="0.5" fill="#c8d0f0"/><circle cx="43.6" cy="614.7" r="0.5" fill="#c8d0f0"/><rect x="29.6" y="662.5" width="26.4" height="19" fill="#e01020"/><rect x="36" y="662.5" width="6" height="19" fill="#fff"/><rect x="29.6" y="669.0" width="26.4" height="6" fill="#fff"/><rect x="37.5" y="662.5" width="3" height="19" fill="#102088"/><rect x="29.6" y="670.5" width="26.4" height="3" fill="#102088"/></svg>
<div class="b" style="left:1147.5px;top:345px;width:34px;height:330px;background:linear-gradient(90deg,#f3f1ea,#fefefb 30%,#f6f5ef)"></div>
<div class="b" style="left:1153px;top:348px;width:23.5px;height:25.5px;background:linear-gradient(135deg,#cad9fb,#b8cbf6 60%,#a9bef0);border:1px solid #e8f0ff;border-radius:2px;box-sizing:border-box;box-shadow:inset -1px -1px 0 #9fb2dc"></div>
<div class="b" style="left:1153px;top:385.3px;width:23.5px;height:48px;background:linear-gradient(90deg,#c3d2f8,#c9d7fb 40%,#b5c7f4);border:1px solid #eaf0ff;border-radius:2px;box-sizing:border-box;box-shadow:inset -1px -1px 0 #a4b6e0"></div>
<div class="b" style="left:1153px;top:653.3px;width:23px;height:25px;background:linear-gradient(135deg,#cad9fb,#b8cbf6 60%,#a9bef0);border:1px solid #e8f0ff;border-radius:2px;box-sizing:border-box;box-shadow:inset -1px -1px 0 #9fb2dc"></div>
<svg style="left:1140px;top:340px" width="50" height="340" viewBox="1140 340 50 340"><path d="M1158.8 364.5 L1164.6 358.5 L1170.4 364.5" fill="none" stroke="#4d6185" stroke-width="3"/><path d="M1158.6 661.5 L1164.2 667.3 L1169.8 661.5" fill="none" stroke="#4d6185" stroke-width="3"/><path d="M1159 403.5H1170 M1159 406.5H1170 M1159 409.5H1170 M1159 412.5H1170" stroke="#eef4ff" stroke-width="1.2"/><path d="M1160 404.5H1171 M1160 407.5H1171 M1160 410.5H1171 M1160 413.5H1171" stroke="#8c9fd8" stroke-width="1.2"/></svg>
<div class="b" style="left:640px;top:425px;width:294px;height:188px;background:rgba(60,60,60,.55);filter:blur(1.6px)"></div>
<div class="b" style="left:634.8px;top:419.8px;width:296px;height:189.2px;background:#fff;border:1.5px solid #aca899;box-sizing:border-box"></div>
<div class="b" style="left:639.2px;top:424.2px;width:288.3px;height:27px;background:#316ac5"></div>
<div class="t" style="left:666.8px;top:427.08px;color:#fff;font-size:17.6px;">Give peer upload preference</div>
<div class="t" style="left:666.8px;top:455.48px;color:#000;font-size:17.6px;">Never upload to this peer</div>
<div class="b" style="left:641px;top:485px;width:283px;height:1.5px;background:#aca899"></div>
<div class="t" style="left:666.8px;top:498.18px;color:#000;font-size:17.6px;">Keep Sorted</div>
<div class="t" style="left:666.8px;top:525.98px;color:#000;font-size:17.6px;">Reverse Dns</div>
<div class="t" style="left:666.8px;top:553.78px;color:#000;font-size:17.6px;">Show Country Flags</div>
<div class="t" style="left:666.8px;top:581.18px;color:#000;font-size:17.6px;">Copy address</div>
<svg style="left:630px;top:490px" width="40" height="100" viewBox="630 490 40 100"><path d="M647 508 L650.8 512 L657.5 503" fill="none" stroke="#000" stroke-width="3.3" stroke-linejoin="miter" stroke-linecap="butt"/><path d="M647 535.8 L650.8 539.8 L657.5 530.8" fill="none" stroke="#000" stroke-width="3.3" stroke-linejoin="miter" stroke-linecap="butt"/><path d="M647 563.6 L650.8 567.6 L657.5 558.6" fill="none" stroke="#000" stroke-width="3.3" stroke-linejoin="miter" stroke-linecap="butt"/></svg>
</body></html>
